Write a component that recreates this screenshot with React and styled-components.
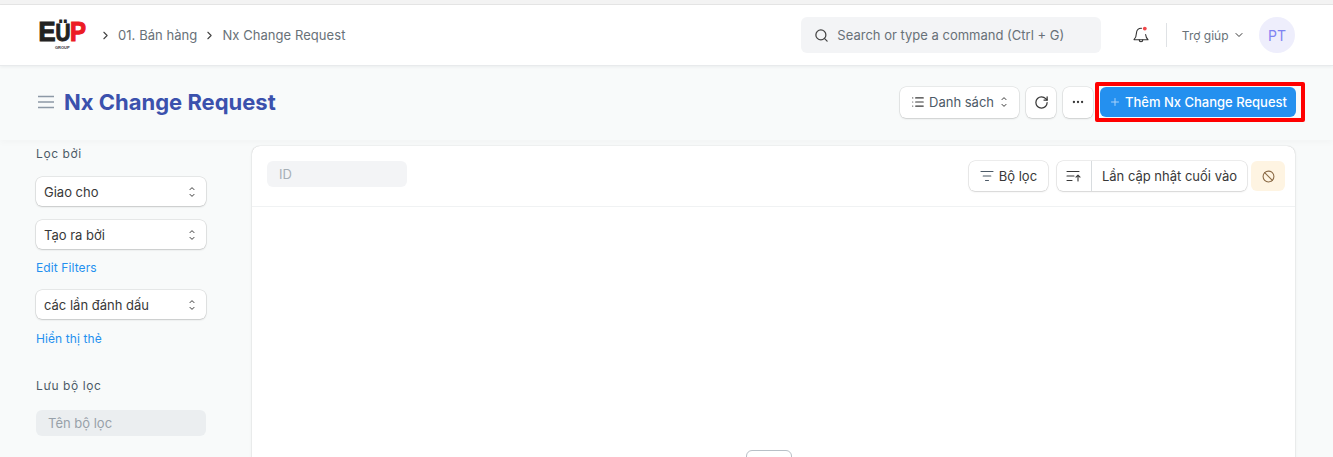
import React from "react";
import styled, { createGlobalStyle } from "styled-components";
import { Search, ChevronRight, ChevronDown, RotateCw, Ellipsis, Plus, List, Ban } from "lucide-react";

const GlobalStyle = createGlobalStyle`
  html, body {
    margin: 0;
    height: 457px;
    overflow: hidden;
    background: #f8fafa;
    font-family: Inter, "Noto Sans", sans-serif;
    color: #383838;
  }
  * { box-sizing: border-box; }
`;

const Logo = () => (
  <svg width="54" height="36" viewBox="0 0 54 36">
    <text x="0.5" y="24" fontFamily="Liberation Sans" fontWeight="700" fontSize="27" fill="#222" stroke="#222" strokeWidth="1.2" textLength="17" lengthAdjust="spacingAndGlyphs">E</text>
    <text x="17.5" y="24" fontFamily="Liberation Sans" fontWeight="700" fontSize="23" fill="#222" stroke="#222" strokeWidth="1" textLength="15" lengthAdjust="spacingAndGlyphs">Ü</text>
    <text x="32" y="24" fontFamily="Liberation Sans" fontWeight="700" fontSize="27" fill="#ec1c24" stroke="#ec1c24" strokeWidth="1.2" textLength="16" lengthAdjust="spacingAndGlyphs">P</text>
    <text x="17" y="32" fontFamily="Liberation Sans" fontWeight="700" fontSize="4" fill="#333">GROUP</text>
  </svg>
);

const BellIcon = () => (
  <svg width="18" height="20" viewBox="0 0 18 20" fill="none" stroke="#333" strokeWidth="1.1" strokeLinecap="round" strokeLinejoin="round">
    <path d="M9.5 3.2C6.6 3 4.6 5 4.5 7.8c-.1 3-.6 5-2.5 6.9h14c-1.6-1.6-2.2-3.2-2.4-5.2" />
    <path d="M7.2 14.8c0 1.3.8 2 1.8 2s1.8-.7 1.8-2" />
    <circle cx="12.8" cy="3.6" r="1.9" fill="#f0484a" stroke="none" />
  </svg>
);

const HamburgerIcon = () => (
  <svg width="16" height="14" viewBox="0 0 16 14" fill="none" stroke="#8d99a6" strokeWidth="1.5">
    <path d="M0 1.5h16M0 7h16M0 12.5h16" />
  </svg>
);

const SelectArrows = () => (
  <svg width="8" height="12" viewBox="0 0 8 12" fill="none" stroke="#383838" strokeWidth="1" strokeLinecap="round" strokeLinejoin="round">
    <path d="M2 3.6 4 1.6 6 3.6M2 8.4 4 10.4 6 8.4" />
  </svg>
);

const FilterIcon = () => (
  <svg width="14" height="12" viewBox="0 0 14 12" fill="none" stroke="#4c5a67" strokeWidth="1.1" strokeLinecap="round">
    <path d="M1 1.5h12M3.2 6h7.6M5.5 10.5h3" />
  </svg>
);

const SortIcon = () => (
  <svg width="15" height="12" viewBox="0 0 15 12" fill="none" stroke="#383838" strokeWidth="1.1" strokeLinecap="round" strokeLinejoin="round">
    <path d="M1 1.5h12M1 6h7M1 10.5h5M12 11V5.5M10 7.2l2-2 2 2" />
  </svg>
);

export default function App() {
  return (
    <Page>
      <GlobalStyle />
      <TopStrip />
      <Navbar>
        <NavLeft>
          <Logo />
          <Crumbs>
            <ChevronRight size={13} color="#444" />
            <span>01. Bán hàng</span>
            <ChevronRight size={13} color="#444" />
            <span>Nx Change Request</span>
          </Crumbs>
        </NavLeft>
        <SearchBox>
          <Search size={15} color="#444" />
          <span>Search or type a command (Ctrl + G)</span>
        </SearchBox>
        <BellWrap>
          <BellIcon />
        </BellWrap>
        <NavDivider />
        <HelpLink>
          Trợ giúp <ChevronDown size={12} color="#383838" />
        </HelpLink>
        <Avatar>PT</Avatar>
      </Navbar>

      <PageHead>
        <HeadTitle>
          <HamburgerIcon />
          <h1>Nx Change Request</h1>
        </HeadTitle>
        <HeadActions>
          <WhiteButton $wide>
            <List size={14} color="#383838" />
            Danh sách
            <SelectArrows />
          </WhiteButton>
          <WhiteButton>
            <RotateCw size={15} color="#383838" />
          </WhiteButton>
          <WhiteButton>
            <Ellipsis size={14} color="#383838" />
          </WhiteButton>
          <PrimaryWrap>
            <PrimaryButton>
              <Plus size={12} color="#a8d3fa" />
              Thêm Nx Change Request
            </PrimaryButton>
          </PrimaryWrap>
        </HeadActions>
      </PageHead>

      <Main>
        <Sidebar>
          <SideLabel>Lọc bởi</SideLabel>
          <SideSelect $mt={16}>
            Giao cho <SelectArrows />
          </SideSelect>
          <SideSelect $mt={14}>
            Tạo ra bởi <SelectArrows />
          </SideSelect>
          <SideLink $mt={11}>Edit Filters</SideLink>
          <SideSelect $mt={15}>
            các lần đánh dấu <SelectArrows />
          </SideSelect>
          <SideLink $mt={12}>Hiển thị thẻ</SideLink>
          <SideLabel $mt={32}>Lưu bộ lọc</SideLabel>
          <FilterName>Tên bộ lọc</FilterName>
        </Sidebar>

        <Card>
          <CardHead>
            <IdField>ID</IdField>
            <CardTools>
              <ToolButton>
                <FilterIcon />
                Bộ lọc
              </ToolButton>
              <SortGroup>
                <SortIconCell>
                  <SortIcon />
                </SortIconCell>
                <SortLabel>Lần cập nhật cuối vào</SortLabel>
              </SortGroup>
              <BanButton>
                <Ban size={13} color="#8a6a45" />
              </BanButton>
            </CardTools>
          </CardHead>
          <CardBody>
            <EmptyBox />
          </CardBody>
        </Card>
      </Main>
    </Page>
  );
}

const Page = styled.div`
  width: 1333px;
  height: 457px;
  overflow: hidden;
`;

const TopStrip = styled.div`
  height: 5px;
  background: #f3f3f3;
  border-bottom: 1px solid #e6e6e6;
`;

const Navbar = styled.header`
  height: 61px;
  background: #fff;
  border-bottom: 1px solid #e8eaec;
  box-shadow: 0 1px 3px rgba(25, 39, 52, 0.06);
  display: flex;
  align-items: center;
  padding: 0 38px;
  position: relative;
`;

const NavLeft = styled.div`
  display: flex;
  align-items: center;
  flex: 1;
`;

const Crumbs = styled.div`
  display: flex;
  align-items: center;
  margin-left: 7px;
  font-size: 13px;
  letter-spacing: 0.06px;
  color: #687178;
  gap: 6px;
`;

const SearchBox = styled.div`
  width: 300px;
  height: 36px;
  border-radius: 6px;
  background: #f3f4f6;
  display: flex;
  align-items: center;
  gap: 8px;
  padding-left: 13px;
  font-size: 13px;
  color: #687178;
`;

const BellWrap = styled.div`
  margin-left: 31px;
  display: flex;
`;

const NavDivider = styled.div`
  width: 1px;
  height: 24px;
  background: #dfe2e5;
  margin: 0 14.5px 0 16px;
`;

const HelpLink = styled.div`
  display: flex;
  align-items: center;
  gap: 4px;
  font-size: 12px;
  color: #687178;
`;

const Avatar = styled.div`
  width: 36px;
  height: 36px;
  border-radius: 50%;
  margin-left: 14.5px;
  background: #eeeefc;
  color: #7e83f2;
  font-size: 14px;
  display: flex;
  align-items: center;
  justify-content: center;
`;

const PageHead = styled.div`
  height: 74px;
  display: flex;
  align-items: center;
  justify-content: space-between;
  padding: 0 37px 2px 38px;
  box-shadow: 0 3px 6px rgba(25, 39, 52, 0.025);
`;

const HeadTitle = styled.div`
  display: flex;
  align-items: center;
  gap: 10px;
  h1 {
    margin: 0;
    font-size: 22px;
    font-weight: 700;
    color: #3b51ad;
  }
`;

const HeadActions = styled.div`
  display: flex;
  align-items: center;
  gap: 7px;
`;

const WhiteButton = styled.button`
  height: 31px;
  min-width: 30px;
  padding: ${(p) => (p.$wide ? "0 11px" : "0 7px")};
  border: none;
  border-radius: 6px;
  background: #fff;
  box-shadow: 0 0 0 0.5px rgba(0, 0, 0, 0.12), 0 1px 2px rgba(0, 0, 0, 0.12);
  display: flex;
  align-items: center;
  justify-content: center;
  gap: 4px;
  font: 13px Inter, sans-serif;
  color: #4c5a67;
  svg:last-child:not(:first-child) { margin-left: 2px; }
`;

const PrimaryWrap = styled.div`
  position: relative;
  &::after {
    content: "";
    position: absolute;
    inset: -5px -9px -5px -5px;
    border: 4px solid #ff0000;
    border-radius: 2px;
    pointer-events: none;
  }
`;

const PrimaryButton = styled.button`
  height: 30px;
  width: 196px;
  border: none;
  border-radius: 6px;
  background: #2490ef;
  color: #fff;
  font: 500 13px Inter, sans-serif;
  display: flex;
  align-items: center;
  justify-content: center;
  gap: 4px;
  white-space: nowrap;
`;

const Main = styled.div`
  display: flex;
  padding: 6px 38px 0 36px;
  gap: 46px;
`;

const Sidebar = styled.aside`
  width: 170px;
  flex: none;
  display: flex;
  flex-direction: column;
`;

const SideLabel = styled.div`
  margin-top: ${(p) => p.$mt || 0}px;
  font-size: 12px;
  line-height: 15px;
  letter-spacing: 0.6px;
  color: #4c5a67;
`;

const SideSelect = styled.div`
  margin-top: ${(p) => p.$mt}px;
  height: 29px;
  padding: 0 10px 0 8px;
  border-radius: 6px;
  background: #fff;
  box-shadow: 0 0 0 0.5px rgba(0, 0, 0, 0.14), 0 1px 2px rgba(0, 0, 0, 0.14);
  display: flex;
  align-items: center;
  justify-content: space-between;
  font-size: 13px;
  color: #383838;
`;

const SideLink = styled.div`
  margin-top: ${(p) => p.$mt}px;
  font-size: 12px;
  line-height: 15px;
  letter-spacing: 0.1px;
  color: #2490ef;
`;

const FilterName = styled.div`
  margin-top: 17px;
  height: 26px;
  border-radius: 6px;
  background: #ebeef0;
  display: flex;
  align-items: center;
  padding-left: 12px;
  font-size: 13px;
  color: #98a1a9;
`;

const Card = styled.section`
  flex: 1;
  height: 500px;
  background: #fff;
  border-radius: 8px 8px 0 0;
  box-shadow: 0 0 1px rgba(0, 0, 0, 0.25), 0 1px 3px rgba(0, 0, 0, 0.1);
`;

const CardHead = styled.div`
  height: 61px;
  padding: 15px 10px 0 15px;
  display: flex;
  justify-content: space-between;
  align-items: flex-start;
  border-bottom: 1px solid #f0f2f3;
`;

const IdField = styled.div`
  width: 140px;
  height: 26px;
  border-radius: 6px;
  background: #f3f4f6;
  padding-left: 12px;
  display: flex;
  align-items: center;
  font-size: 13px;
  color: #a6afb7;
`;

const CardTools = styled.div`
  display: flex;
  align-items: center;
  gap: 9px;
`;

const ToolButton = styled.div`
  height: 30px;
  width: 79px;
  border-radius: 6px;
  background: #fff;
  box-shadow: 0 0 0 0.5px rgba(0, 0, 0, 0.14), 0 1px 2px rgba(0, 0, 0, 0.1);
  display: flex;
  align-items: center;
  justify-content: center;
  gap: 5px;
  font-size: 13px;
  color: #383838;
`;

const SortGroup = styled.div`
  height: 30px;
  display: flex;
  border-radius: 6px;
  background: #fff;
  box-shadow: 0 0 0 0.5px rgba(0, 0, 0, 0.14), 0 1px 2px rgba(0, 0, 0, 0.1);
`;

const SortIconCell = styled.div`
  width: 35px;
  display: flex;
  align-items: center;
  justify-content: center;
  border-right: 1px solid #d8dcdf;
`;

const SortLabel = styled.div`
  padding: 0 10px;
  display: flex;
  align-items: center;
  font-size: 13px;
  color: #383838;
  white-space: nowrap;
`;

const BanButton = styled.div`
  width: 34px;
  height: 30px;
  margin-left: -5px;
  border-radius: 6px;
  background: #fef4e2;
  display: flex;
  align-items: center;
  justify-content: center;
`;

const CardBody = styled.div`
  padding: 243px 10px 0 0;
  display: flex;
  justify-content: center;
`;

const EmptyBox = styled.div`
  width: 46px;
  height: 40px;
  border: 1px solid #b8c0c7;
  border-radius: 6px;
`;
